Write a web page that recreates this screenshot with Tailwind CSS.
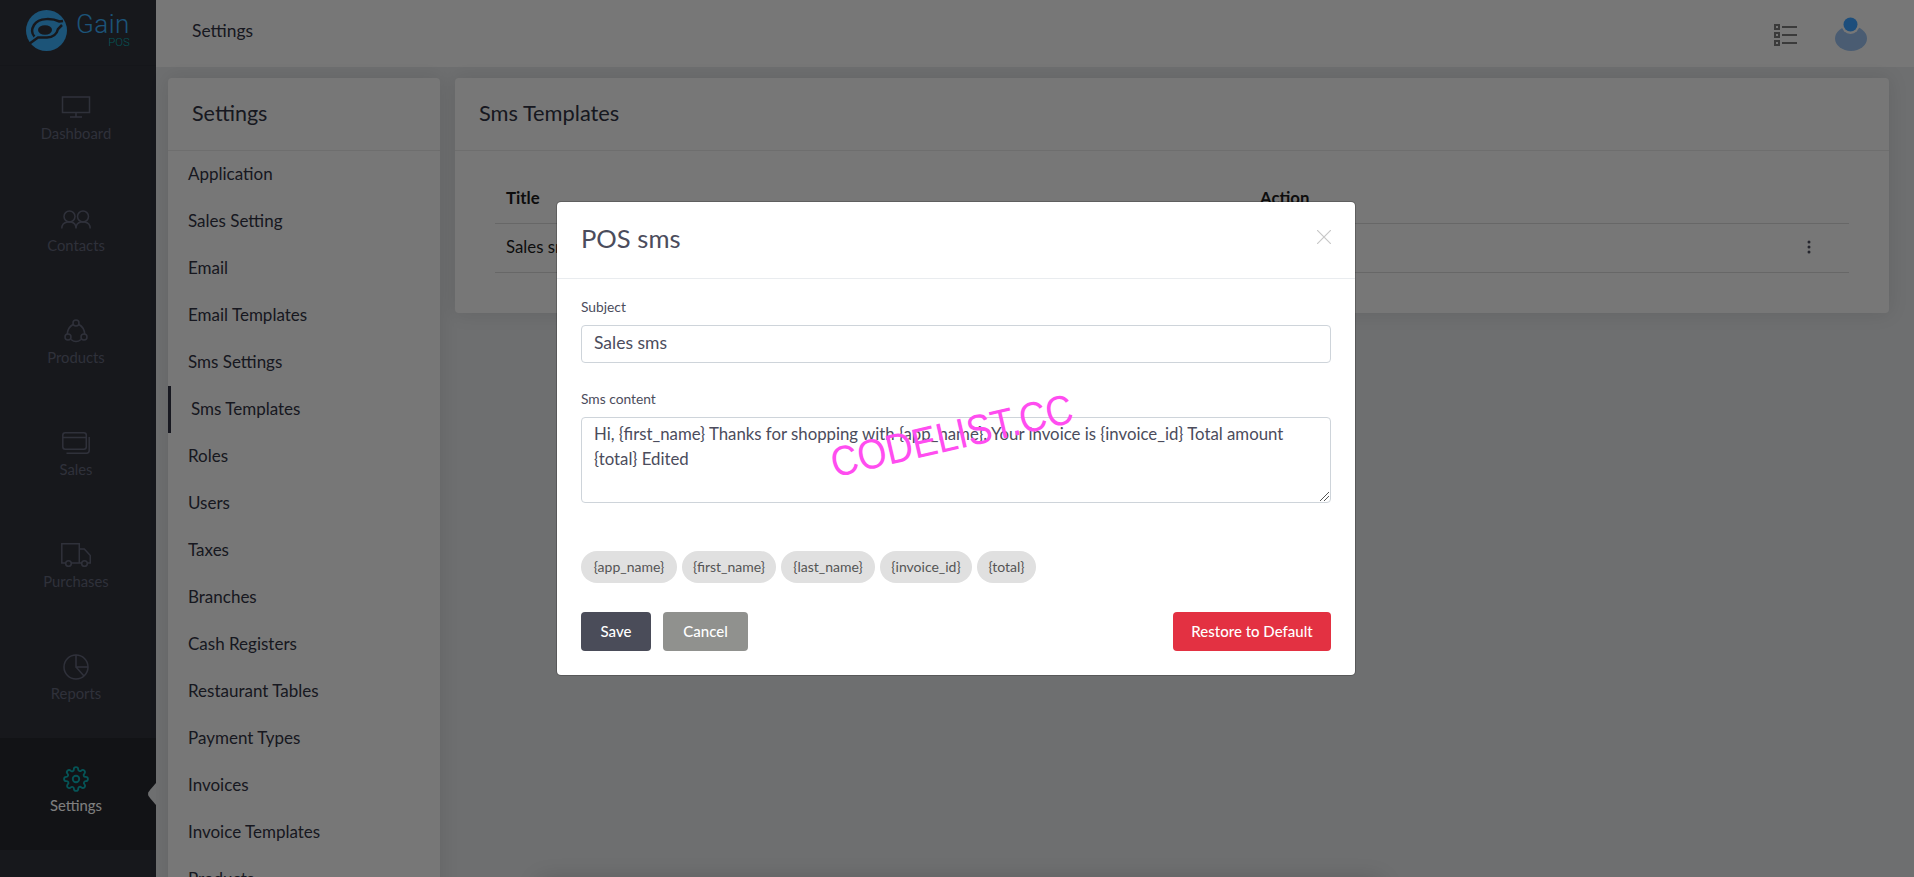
<!DOCTYPE html>
<html><head><meta charset="utf-8"><script src="https://cdn.jsdelivr.net/npm/@tailwindcss/browser@4"></script></head>
<body class="h-[877px] w-[1914px] overflow-hidden bg-[#dcdee0] font-['Lato','Open_Sans',sans-serif] text-[#2f3140]">
<div class="relative flex h-[877px] w-[1914px] overflow-hidden">
  <aside class="flex w-[156px] shrink-0 flex-col bg-[#2e3039]">
    <div class="flex h-[66px] items-center gap-[9px] border-b border-[#2a2c34] pb-[4px] pl-[26px]">
      <svg class="h-[41px] w-[41px] shrink-0" viewBox="0 0 41 41"><circle cx="20.5" cy="20.5" r="20.5" fill="#38a8f0"/><ellipse cx="19" cy="20" rx="7" ry="4.800" fill="#2e3039"/><path d="M37 11l-3.500.5C27 8.500 13 7 8 15c-3 5-2 9 .5 11.500" fill="none" stroke="#2e3039" stroke-width="2.500"/><path d="M3 34l9-6.500h9c6 0 10-3.500 11-8.500l4-4" fill="none" stroke="#2e3039" stroke-width="2.500"/></svg>
      <div class="flex flex-col items-end"><span class="font-['Roboto',sans-serif] text-[26px] leading-[22px] font-light tracking-[.5px] text-[#38a8f0]">Gain</span><span class="mt-[2px] font-['Roboto',sans-serif] text-[11.500px] leading-[11px] font-light text-[#0aa8ad]">POS</span></div>
    </div>
    <a class="flex h-[112px] flex-col items-center pr-[4px] pt-[28px] text-[14.800px] leading-[20px] text-[#5f6275]">
      <span class="flex h-[26px] items-center"><svg class="h-[22px] w-[30px]" viewBox="0 0 30 22" fill="none" stroke="currentColor" stroke-width="1.500"><rect x="1.500" y="1" width="27" height="15.500"/><path d="M15 17v3.500M9 21h12"/></svg></span><span class="mt-[3px]">Dashboard</span></a>
    <a class="flex h-[112px] flex-col items-center pr-[4px] pt-[28px] text-[14.800px] leading-[20px] text-[#5f6275]">
      <span class="flex h-[26px] items-center"><svg class="h-[19px] w-[30px]" viewBox="0 0 30 19" fill="none" stroke="currentColor" stroke-width="1.500"><circle cx="8.500" cy="6.500" r="5.500"/><circle cx="22" cy="6.500" r="5.500"/><path d="M.8 18.500c0-3.500 2.500-6 5.700-6.500h3.500c3 .5 5 3 5 6.500 0-3.500 2-6 5-6.500h3.500c3.200.5 5.700 3 5.700 6.500"/></svg></span><span class="mt-[3px]">Contacts</span></a>
    <a class="flex h-[112px] flex-col items-center pr-[4px] pt-[28px] text-[14.800px] leading-[20px] text-[#5f6275]">
      <span class="flex h-[26px] items-center"><svg class="h-[24px] w-[24px]" viewBox="0 0 24 24" fill="none" stroke="currentColor" stroke-width="1.500"><circle cx="12" cy="4" r="3"/><circle cx="4" cy="18" r="3"/><circle cx="20" cy="18" r="3"/><path d="M9 5.500C5.500 7.500 3.500 11 3.300 15M15 5.500c3.500 2 5.500 5.500 5.700 9.500M7 20.500c3 2.500 7 2.500 10 0"/></svg></span><span class="mt-[3px]">Products</span></a>
    <a class="flex h-[112px] flex-col items-center pr-[4px] pt-[28px] text-[14.800px] leading-[20px] text-[#5f6275]">
      <span class="flex h-[26px] items-center"><svg class="h-[22px] w-[28px]" viewBox="0 0 28 22" fill="none" stroke="currentColor" stroke-width="1.500"><rect x=".8" y=".8" width="23.500" height="16.500" rx="2.500"/><path d="M.8 5.500h23.500M4.500 21.200h20a2.700 2.700 0 0 0 2.700-2.700V5"/></svg></span><span class="mt-[3px]">Sales</span></a>
    <a class="flex h-[112px] flex-col items-center pr-[4px] pt-[28px] text-[14.800px] leading-[20px] text-[#5f6275]">
      <span class="flex h-[26px] items-center"><svg class="h-[24px] w-[30px]" viewBox="0 0 30 24" fill="none" stroke="currentColor" stroke-width="1.500"><path d="M4.500 20H.8V.8h17.500V20H10M18.300 6h5l6 6.500V20h-3M18.300 20h2.700"/><circle cx="7.500" cy="20.500" r="2.800"/><circle cx="23.500" cy="20.500" r="2.800"/></svg></span><span class="mt-[3px]">Purchases</span></a>
    <a class="flex h-[112px] flex-col items-center pr-[4px] pt-[28px] text-[14.800px] leading-[20px] text-[#5f6275]">
      <span class="flex h-[26px] items-center"><svg class="h-[26px] w-[26px]" viewBox="0 0 26 26" fill="none" stroke="currentColor" stroke-width="1.500"><circle cx="13" cy="13" r="12"/><path d="M13 1v12h12M13 13l8 9"/></svg></span><span class="mt-[3px]">Reports</span></a>
    <a class="relative flex h-[112px] flex-col items-center bg-[#24262d] pr-[4px] pt-[28px] text-[14.800px] leading-[20px] text-white">
      <span class="flex h-[26px] items-center"><svg class="h-[26px] w-[26px] text-[#0aa8ad]" viewBox="0 0 24 24" fill="none" stroke="currentColor" stroke-width="1.700" stroke-linecap="round" stroke-linejoin="round"><circle cx="12" cy="12" r="3"/><path d="M19.400 15a1.650 1.650 0 0 0 .33 1.820l.06.06a2 2 0 1 1-2.830 2.830l-.06-.06a1.650 1.650 0 0 0-2.820 1.170V21a2 2 0 1 1-4 0v-.09a1.650 1.650 0 0 0-2.820-1.170l-.06.06a2 2 0 1 1-2.830-2.830l.06-.06A1.650 1.650 0 0 0 3.090 14H3a2 2 0 1 1 0-4h.09a1.650 1.650 0 0 0 1.170-2.820l-.06-.06a2 2 0 1 1 2.830-2.830l.06.06A1.650 1.650 0 0 0 10 3.090V3a2 2 0 1 1 4 0v.09a1.650 1.650 0 0 0 2.820 1.170l.06-.06a2 2 0 1 1 2.830 2.830l-.06.06A1.650 1.650 0 0 0 20.910 10H21a2 2 0 1 1 0 4h-.09a1.650 1.650 0 0 0-1.510 1z"/></svg></span>
      <span class="mt-[3px]">Settings</span>
      <span class="absolute right-0 top-[45px] h-[22px] w-[8px] bg-[#dcdee0] [clip-path:polygon(100%_0,30%_30%,5%_42%,0_50%,5%_58%,30%_70%,100%_100%)]"></span>
    </a>
  </aside>
  <div class="flex min-w-0 flex-1 flex-col">
    <header class="flex h-[67px] shrink-0 items-center justify-between bg-[#efefef] pl-[36px] pr-[47px]">
      <span class="mb-[5px] text-[17.400px]">Settings</span>
      <div class="flex items-center gap-[38px]">
        <svg class="mt-[3px] h-[22px] w-[23px]" viewBox="0 0 23 22" fill="#777"><path fill-rule="evenodd" d="M0 0h6v6H0zM2 2v2h2V2zM0 8h6v6H0zM2 10v2h2v-2zM0 16h6v6H0zM2 18v2h2v-2z"/><path d="M8 2h15v2H8zM8 10h15v2H8zM8 18h15v2H8z"/></svg>
        <svg class="h-[34px] w-[32px]" viewBox="0 0 32 34"><ellipse cx="16" cy="21.500" rx="16" ry="12.500" fill="#94b9e4"/><circle cx="15.500" cy="8" r="9" fill="#efefef"/><circle cx="15.500" cy="7.500" r="7" fill="#3a9cf8"/></svg>
      </div>
    </header>
    <main class="flex min-h-0 flex-1 items-start gap-[15px] pl-[12px] pr-[25px] pt-[11px]">
      <section class="h-[900px] w-[272px] shrink-0 rounded-[4px] bg-[#efefef] shadow-[0_0_20px_rgba(0,0,0,.1)]">
        <h2 class="flex h-[73px] items-center border-b border-[#dcdcdc] pb-[1px] pl-[24px] text-[21.500px]">Settings</h2>
        <nav class="text-[17px]">
          <a class="flex h-[47px] items-center pb-[1px] pl-[20px]">Application</a>
          <a class="flex h-[47px] items-center pb-[1px] pl-[20px]">Sales Setting</a>
          <a class="flex h-[47px] items-center pb-[1px] pl-[20px]">Email</a>
          <a class="flex h-[47px] items-center pb-[1px] pl-[20px]">Email Templates</a>
          <a class="flex h-[47px] items-center pb-[1px] pl-[20px]">Sms Settings</a>
          <a class="flex h-[47px] items-center border-l-[3px] border-[#2f3140] pb-[1px] pl-[20px]">Sms Templates</a>
          <a class="flex h-[47px] items-center pb-[1px] pl-[20px]">Roles</a>
          <a class="flex h-[47px] items-center pb-[1px] pl-[20px]">Users</a>
          <a class="flex h-[47px] items-center pb-[1px] pl-[20px]">Taxes</a>
          <a class="flex h-[47px] items-center pb-[1px] pl-[20px]">Branches</a>
          <a class="flex h-[47px] items-center pb-[1px] pl-[20px]">Cash Registers</a>
          <a class="flex h-[47px] items-center pb-[1px] pl-[20px]">Restaurant Tables</a>
          <a class="flex h-[47px] items-center pb-[1px] pl-[20px]">Payment Types</a>
          <a class="flex h-[47px] items-center pb-[1px] pl-[20px]">Invoices</a>
          <a class="flex h-[47px] items-center pb-[1px] pl-[20px]">Invoice Templates</a>
          <a class="flex h-[47px] items-center pb-[1px] pl-[20px]">Products</a>
        </nav>
      </section>
      <section class="h-[235px] flex-1 rounded-[4px] bg-[#efefef] shadow-[0_0_20px_rgba(0,0,0,.1)]">
        <h2 class="flex h-[73px] items-center border-b border-[#dcdcdc] pb-[1px] pl-[24px] text-[21.800px]">Sms Templates</h2>
        <div class="mx-[40px] mt-[25px] text-[16.800px] text-[#1a1a1a]">
          <div class="flex h-[48px] items-center border-b border-[#cfcfcf] pb-[4px] font-bold"><span class="ml-[11px] w-[754px]">Title</span><span>Action</span></div>
          <div class="flex h-[49px] items-center justify-between border-b border-[#cfcfcf] pb-[2px]"><span class="ml-[11px]">Sales sms</span>
            <svg class="mr-[38px] h-[14px] w-[4px]" viewBox="0 0 4 14" fill="#4b4c5c"><circle cx="2" cy="2" r="1.500"/><circle cx="2" cy="7" r="1.500"/><circle cx="2" cy="12" r="1.500"/></svg></div>
        </div>
      </section>
    </main>
  </div>
  <div class="absolute left-[540px] top-[882px] h-[30px] w-[840px] shadow-[0_0_24px_rgba(0,0,0,.2)]"></div>
  <div class="absolute inset-0 bg-black/50"></div>
  <div class="absolute left-[556px] top-[201px] flex h-[475px] w-[800px] flex-col rounded-[5px] border border-black/20 bg-white bg-clip-padding text-[#4b4c5c]">
    <div class="flex h-[77px] shrink-0 items-center justify-between border-b border-[#e9ecef] pb-[3px] pl-[24px] pr-[24px]">
      <h3 class="text-[25.600px]">POS sms</h3>
      <svg class="mb-[4px] h-[14px] w-[14px]" viewBox="0 0 14 14" stroke="#c8c8c8" stroke-width="1.200"><path d="M0 0l14 14M14 0L0 14"/></svg>
    </div>
    <div class="flex flex-1 flex-col px-[24px] pt-[18px]">
      <label class="text-[13.800px] leading-[20px]">Subject</label>
      <div class="mt-[8px] flex h-[38px] items-center rounded-[4px] border border-[#ced4da] px-[12px] pb-[1px] text-[17.500px]">Sales sms</div>
      <label class="mt-[26px] text-[13.800px] leading-[20px]">Sms content</label>
      <div class="relative mt-[8px] h-[86px] rounded-[4px] border border-[#ced4da] px-[12px] pt-[4px] text-[16.800px] leading-[24.500px]">
        Hi, {first_name} Thanks for shopping with {app_name}. Your invoice is {invoice_id} Total amount<br>{total} Edited
        <svg class="absolute bottom-[1px] right-[1px] h-[9px] w-[9px]" viewBox="0 0 9 9" stroke="#555" stroke-width="1"><path d="M0 9l9-9M4 9l5-5"/></svg>
      </div>
      <div class="mt-[48px] flex gap-[5px] text-[14px] text-[#555]">
        <span class="flex h-[32px] w-[96px] items-center justify-center rounded-full bg-[#e0e0e0] pb-[2px]">{app_name}</span>
        <span class="flex h-[32px] w-[94px] items-center justify-center rounded-full bg-[#e0e0e0] pb-[2px]">{first_name}</span>
        <span class="flex h-[32px] w-[94px] items-center justify-center rounded-full bg-[#e0e0e0] pb-[2px]">{last_name}</span>
        <span class="flex h-[32px] w-[92px] items-center justify-center rounded-full bg-[#e0e0e0] pb-[2px]">{invoice_id}</span>
        <span class="flex h-[32px] w-[59px] items-center justify-center rounded-full bg-[#e0e0e0] pb-[2px]">{total}</span>
      </div>
      <div class="mt-[29px] flex text-[15px] font-medium text-white">
        <span class="flex h-[39px] w-[70px] items-center justify-center rounded-[4px] bg-[#4a4c59]">Save</span>
        <span class="ml-[12px] flex h-[39px] w-[85px] items-center justify-center rounded-[4px] bg-[#90918e]">Cancel</span>
        <span class="ml-auto flex h-[39px] w-[158px] items-center justify-center rounded-[4px] bg-[#e33142]">Restore to Default</span>
      </div>
    </div>
  </div>
  <div class="absolute left-[813px] top-[415px] origin-center rotate-[-13deg] scale-x-[.89] font-['Liberation_Sans',sans-serif] text-[42px] leading-none whitespace-nowrap text-[#ff4df0]">CODELIST.CC</div>
</div>
</body></html>
